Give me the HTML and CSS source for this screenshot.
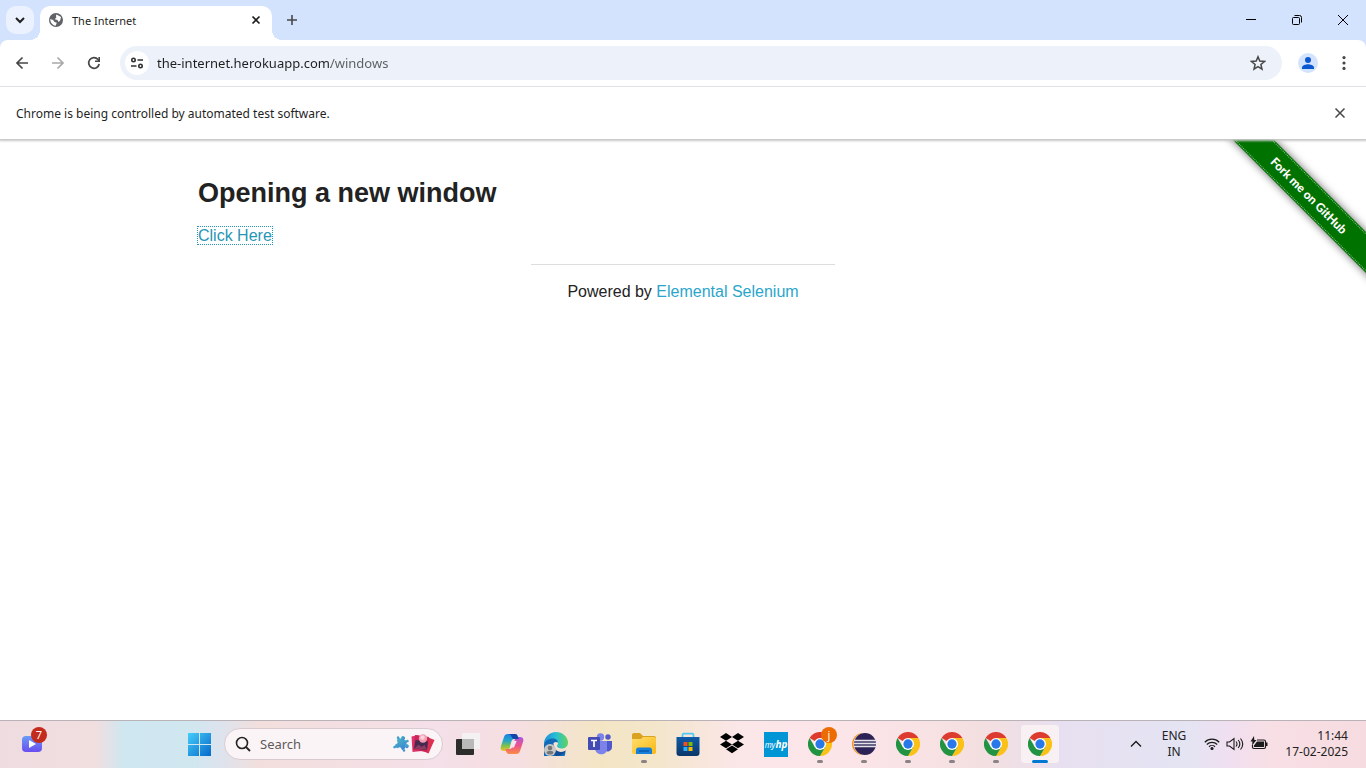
FILE: index.html
```html
<!DOCTYPE html>
<html lang="en">
<head>
<meta charset="utf-8">
<meta name="viewport" content="width=device-width, initial-scale=1">
<title>The Internet</title>
<link rel="stylesheet" href="styles.css">
</head>
<body>
<svg class="defs" aria-hidden="true">
  <defs>
    <linearGradient id="win" x1="0" y1="0" x2="1" y2="1"><stop offset="0" stop-color="#45cdfb"/><stop offset="1" stop-color="#0569c9"/></linearGradient>
    <linearGradient id="vid" x1="0" y1="0" x2="0" y2="1"><stop offset="0" stop-color="#6b9cf5"/><stop offset="1" stop-color="#6a4df0"/></linearGradient>
    <linearGradient id="puz" x1="0" y1="0" x2="1" y2="1"><stop offset="0" stop-color="#49b9c5"/><stop offset="1" stop-color="#3c7fd4"/></linearGradient>
    <linearGradient id="copA" x1="0" y1="0" x2="0" y2="1"><stop offset="0" stop-color="#1c7fe4"/><stop offset=".4" stop-color="#24a7c8"/><stop offset=".7" stop-color="#7fc14c"/><stop offset="1" stop-color="#f4c229"/></linearGradient>
    <linearGradient id="copB" x1="0" y1="0" x2="0" y2="1"><stop offset="0" stop-color="#a658df"/><stop offset=".5" stop-color="#ee5289"/><stop offset="1" stop-color="#fd8b45"/></linearGradient>
    <linearGradient id="edgeA" x1="0" y1="0" x2="1" y2="0"><stop offset="0" stop-color="#1c8fd8"/><stop offset=".5" stop-color="#29bfd4"/><stop offset="1" stop-color="#60d35b"/></linearGradient>
    <linearGradient id="fold" x1="0" y1="0" x2="1" y2="1"><stop offset="0" stop-color="#ffdf6d"/><stop offset="1" stop-color="#fbb713"/></linearGradient>
    <linearGradient id="store" x1="0" y1="0" x2="0" y2="1"><stop offset="0" stop-color="#0f5aa8"/><stop offset="1" stop-color="#0b3768"/></linearGradient>
    <symbol id="chrome" viewBox="0 0 48 48">
      <path fill="#de3b30" d="M24 24 3.2 12A24 24 0 0 1 44.8 12z"/>
      <path fill="#fbc116" d="M24 24V12h20.8A24 24 0 0 1 24 48l10.4-18z"/>
      <path fill="#229342" d="M24 24l10.4 6L24 48A24 24 0 0 1 3.2 12l10.4 18z"/>
      <circle cx="24" cy="24" r="12" fill="#fff"/>
      <circle cx="24" cy="24" r="9.3" fill="#2878ea"/>
    </symbol>
  </defs>
</svg>

<header class="browser">
  <div class="tabstrip">
    <button class="tab-search" aria-label="Search tabs"><svg width="12" height="12" viewBox="0 0 12 12"><path d="M2 4l4 4 4-4" fill="none" stroke="#1f1f1f" stroke-width="2"/></svg></button>
    <div class="tab">
      <svg width="16" height="16" viewBox="0 0 16 16"><circle cx="8" cy="8" r="7" fill="#5f6368"/><path d="M8.500 2.500 13 5l-.8 3.500-1.700 1.600-1-2.200-2.800-.6 1.800-2-.6-1.300zM2.200 7l2.900 1 1.500 2.100 2.200.6-1.100 3.100C5 13.400 2.400 11.300 2.200 7z" fill="#fff"/></svg>
      <span class="tab-title">The Internet</span>
      <button class="tab-close" aria-label="Close tab"><svg width="10" height="10" viewBox="0 0 10 10"><path d="M1.500 1.500l7 7m0-7l-7 7" stroke="#1f1f1f" stroke-width="1.700"/></svg></button>
    </div>
    <button class="new-tab" aria-label="New tab"><svg width="12" height="12" viewBox="0 0 12 12"><path d="M6 1v10M1 6h10" stroke="#474747" stroke-width="1.600"/></svg></button>
    <div class="win-controls">
      <button aria-label="Minimize"><svg width="12" height="12" viewBox="0 0 12 12"><path d="M1 5.500h10" stroke="#000"/></svg></button>
      <button aria-label="Restore"><svg width="12" height="12" viewBox="0 0 12 12" fill="none" stroke="#000"><rect x="1.500" y="3.500" width="7" height="7" rx="1"/><path d="M3.500 1.500h5a2 2 0 0 1 2 2v5"/></svg></button>
      <button aria-label="Close"><svg width="12" height="12" viewBox="0 0 12 12"><path d="M1 1l10 10m0-10L1 11" stroke="#000"/></svg></button>
    </div>
  </div>
  <div class="toolbar">
    <button aria-label="Back"><svg width="16" height="16" viewBox="0 0 16 16"><path d="M14 8H3m5.500-5.500L3 8l5.500 5.500" fill="none" stroke="#474747" stroke-width="1.700"/></svg></button>
    <button aria-label="Forward" disabled><svg width="16" height="16" viewBox="0 0 16 16"><path d="M2 8h11M7.500 2.500 13 8l-5.500 5.500" fill="none" stroke="#a9a9a9" stroke-width="1.700"/></svg></button>
    <button aria-label="Reload"><svg width="16" height="16" viewBox="0 0 16 16"><path d="M13.200 9A5.300 5.300 0 1 1 12 4.500l1.200 1.300" fill="none" stroke="#474747" stroke-width="1.700"/><path d="M14 2v5H9V5.400h3.400V2z" fill="#474747"/></svg></button>
    <div class="address">
      <button class="site-info" aria-label="View site information"><svg width="14" height="14" viewBox="0 0 14 14" fill="none" stroke="#303030" stroke-width="1.600"><circle cx="3.500" cy="4" r="1.700"/><path d="M7.500 4H13M1 10h5.500"/><circle cx="10.500" cy="10" r="1.700"/></svg></button>
      <input class="url" type="text" aria-label="Address and search bar" value="the-internet.herokuapp.com/windows" spellcheck="false">
      <button class="star" aria-label="Bookmark this tab"><svg width="16" height="16" viewBox="0 0 16 16"><path d="M8 1.800l1.800 4.300 4.700.4-3.600 3 1.100 4.600L8 11.700l-4 2.400 1.100-4.600-3.600-3 4.700-.4z" fill="none" stroke="#474747" stroke-width="1.500"/></svg></button>
    </div>
    <button aria-label="Profile"><svg width="20" height="20" viewBox="0 0 20 20"><circle cx="10" cy="10" r="10" fill="#d3e3fd"/><circle cx="10" cy="7" r="3" fill="#0b57d0"/><path d="M4 16v-1.500c0-2.300 4-3.300 6-3.300s6 1 6 3.300V16z" fill="#0b57d0"/></svg></button>
    <button aria-label="Menu"><svg width="16" height="16" viewBox="0 0 16 16" fill="#474747"><circle cx="8" cy="2.600" r="1.600"/><circle cx="8" cy="8" r="1.600"/><circle cx="8" cy="13.400" r="1.600"/></svg></button>
  </div>
  <div class="infobar">
    <p>Chrome is being controlled by automated test software.</p>
    <button aria-label="Dismiss"><svg width="12" height="12" viewBox="0 0 12 12"><path d="M1.500 1.500l9 9m0-9l-9 9" stroke="#474747" stroke-width="1.500"/></svg></button>
  </div>
</header>

<main class="page">
  <a class="ribbon" href="#github"><span>Fork me on GitHub</span></a>
  <div class="content">
    <h3>Opening a new window</h3>
    <a class="click" href="#new">Click Here</a>
  </div>
  <footer class="powered">
    <hr>
    Powered by <a href="#elemental">Elemental Selenium</a>
  </footer>
</main>

<nav class="taskbar" aria-label="Taskbar">
  <div class="widgets">
    <button class="task" aria-label="Widgets"><svg width="20" height="16" viewBox="0 0 20 16"><rect width="20" height="16" rx="4" fill="url(#vid)"/><path d="M7 4l7 4-7 4z" fill="#fff"/></svg><span class="badge red">7</span></button>
  </div>
  <div class="apps">
    <button class="task" aria-label="Start"><svg width="24" height="24" viewBox="0 0 24 24"><path d="M0 1h11v11H0zM12 1h11v11H12zM0 13h11v11H0zM12 13h11v11H12z" fill="url(#win)"/></svg></button>
    <label class="search">
      <svg width="16" height="16" viewBox="0 0 16 16"><circle cx="7" cy="7" r="5.500" fill="none" stroke="#222" stroke-width="1.600"/><path d="M11 11l4 4" stroke="#222" stroke-width="1.800"/></svg>
      <input type="text" placeholder="Search" aria-label="Search">
      <svg width="42" height="24" viewBox="0 0 42 24">
        <g transform="rotate(20 8 12)" fill="url(#puz)"><path d="M3 7h10v10H3z"/><circle cx="8" cy="5.800" r="2"/><circle cx="14.200" cy="12" r="2"/><circle cx="3" cy="7" r="1.300"/><circle cx="13" cy="7" r="1.300"/><circle cx="3" cy="17" r="1.300"/><circle cx="13" cy="17" r="1.300"/></g>
        <circle cx="2.600" cy="10.200" r="1.900" fill="#fbf4f6"/><circle cx="6.600" cy="17.200" r="1.900" fill="#fbf4f6"/>
        <path d="M18.500 4.500l7-1.500 3 16-9 1z" fill="#e0326c"/>
        <path d="M34 5l7.500 3-6 13.500-9-4z" fill="#dc2f51"/>
        <path d="M22 3l14 2-2 15-14-2z" fill="#c9265a"/>
        <path d="M22.500 8l12.500 1.500-1.200 8.500-12.600-1.500z" fill="#46294f"/>
        <circle cx="30" cy="6.500" r="4.200" fill="#f29db2"/><circle cx="29.500" cy="5.500" r="2.200" fill="#f6d5dc"/>
        <path d="M21.500 16.500l4-4 3 2.500 3-2 2.500 4.800z" fill="#8c3c63"/>
      </svg>
    </label>
    <button class="task" aria-label="Task view"><svg width="24" height="24" viewBox="0 0 24 24"><rect x="0" y="7" width="18" height="16" rx="1" fill="#2c2c2a"/><rect x="6" y="1" width="18" height="16" rx="1" fill="#f4f1f2"/><path d="M6 7h12v10H6z" fill="#b9b9b9"/></svg></button>
    <button class="task" aria-label="Copilot"><svg width="24" height="24" viewBox="0 0 24 24"><path d="M8 2h7c2 0 2.500 1.500 3 3l.8 2h-4C12 7 11.500 9 11 11l-1.500 5.500C9 18 8 19 6 19H4c-3 0-4-2-3-5l3-9c.6-2 1.700-3 4-3z" fill="url(#copA)"/><path d="M16 22H9c-2 0-2.500-1.500-3-3l-.6-2H9c3 0 3.700-2 4.300-4l1.500-5.500C15.300 6 16 5 18 5h2c3 0 4 2 3 5l-3 9c-.6 2-1.700 3-4 3z" fill="url(#copB)"/><path d="M8 2h7c2 0 2.500 1.500 3 3l.8 2h-4c-1.800 0-2.500-.4-3.100-2C11 3.500 10.500 2 8 2z" fill="#1746ab"/><path d="M12.500 9h4.200L14 15.500h-4z" fill="#f7e4ee"/></svg></button>
    <button class="task" aria-label="Edge"><svg width="24" height="24" viewBox="0 0 24 24"><path d="M0 12C0 5 5.500 0 12 0s12 5 12 10.500c0 4-3 6-6.500 6-2.500 0-4.500-1-4.500-2.500 0-1 1-1.500 1-3 0-2-2-3.500-4.500-3.500C5 7.500 2 10 0 12z" fill="url(#edgeA)"/><path d="M0 12c1-3 4.500-5.500 8.500-5.500 3.500 0 5.500 2 5.500 4-4-2-6 2-5 5 1.500 4.500 7 6.500 12.500 3.500A12 12 0 1 1 0 12z" fill="#126bb9"/><path d="M10 12c-1 4 3 8 7 8 2 0 4-1 5-2-2 4-6 6-10 6-5-3-6-9-2-12z" fill="#124c94"/><circle cx="6" cy="18" r="6" fill="#c9c7c5"/><circle cx="6" cy="16" r="2.300" fill="#777"/><path d="M2.500 21c0-3 7-3 7 0-2 2-5 2-7 0z" fill="#777"/></svg></button>
    <button class="task" aria-label="Teams"><svg width="24" height="24" viewBox="0 0 24 24"><circle cx="12.500" cy="5" r="3.700" fill="#7b83eb"/><circle cx="20" cy="5" r="2.700" fill="#5059c9"/><path d="M16 9h8v6c0 5-7 6-8 2z" fill="#5059c9"/><path d="M7 9h12v8c0 7-11 7-12 0z" fill="#7b83eb"/><rect y="5" width="12" height="13" rx="1" fill="#444bb2"/><path d="M3 8.500h6M6 8.500V15" stroke="#fff" stroke-width="1.700"/></svg></button>
    <button class="task open" aria-label="File Explorer"><svg width="24" height="24" viewBox="0 0 24 24"><path d="M0 3c0-1 .6-2 2-2h6l3 3h11c1.500 0 2 1 2 2v5H0z" fill="#daa220"/><path d="M0 7h9l2-2h11c1.500 0 2 1 2 2v13c0 1-.7 2-2 2H2c-1.300 0-2-1-2-2z" fill="url(#fold)"/><path d="M4 22v-4c0-1.500 1-2.500 2.500-2.500h11c1.500 0 2.500 1 2.500 2.500v4z" fill="#1780da"/><path d="M7 19h10" stroke="#0b5aab" stroke-width="1.500"/></svg></button>
    <button class="task" aria-label="Microsoft Store"><svg width="24" height="24" viewBox="0 0 24 24"><path d="M6.500 6V3c0-.8.500-1.300 1.300-1.300h8.400c.8 0 1.300.5 1.300 1.300v3" fill="none" stroke="#50c8f4" stroke-width="1.700"/><path d="M.5 5h23v16c0 2-1 3-3 3h-17c-2 0-3-1-3-3z" fill="url(#store)"/><path d="M7.500 10h4v4h-4z" fill="#f25022"/><path d="M12.500 10h4v4h-4z" fill="#7fba00"/><path d="M7.500 15h4v4h-4z" fill="#2db1f5"/><path d="M12.500 15h4v4h-4z" fill="#ffb900"/></svg></button>
    <button class="task" aria-label="Dropbox"><svg width="24" height="24" viewBox="0 0 24 24"><path d="M6 1l6 4-6 3.700L0 5zM18 1l6 4-6 3.700L12 5zM6 8.700l6 3.700-6 3.900-6-3.900zM18 8.700l6 3.700-6 3.900-6-3.900zM12 13.600l6 3.700-6 3.900-6-3.900z" fill="#000"/></svg></button>
    <button class="task" aria-label="myHP"><span class="hp">my<b>hp</b></span></button>
    <button class="task open" aria-label="Chrome, profile j"><svg width="24" height="24"><use href="#chrome"/></svg><span class="badge orange">j</span></button>
    <button class="task open" aria-label="Eclipse"><svg width="24" height="24" viewBox="0 0 24 24"><circle cx="11" cy="12" r="11" fill="#f7941e"/><circle cx="12.500" cy="12" r="11" fill="#f7e5e8"/><circle cx="13" cy="12" r="11" fill="#2c2255"/><path d="M2 8.500h22M2 11.500h22M2 14.500h22" stroke="#e5e2ec" stroke-width="1.600"/><path d="M2 10h22M2 13h22" stroke="#7b7895"/></svg></button>
    <button class="task open" aria-label="Chrome"><svg width="24" height="24"><use href="#chrome"/></svg></button>
    <button class="task open" aria-label="Chrome"><svg width="24" height="24"><use href="#chrome"/></svg></button>
    <button class="task open" aria-label="Chrome"><svg width="24" height="24"><use href="#chrome"/></svg></button>
    <button class="task open active" aria-label="Chrome"><svg width="24" height="24"><use href="#chrome"/></svg></button>
  </div>
  <div class="tray">
    <button class="chevron" aria-label="Show hidden icons"><svg width="12" height="12" viewBox="0 0 12 12"><path d="M1 8.500l5-5 5 5" fill="none" stroke="#1b1b1b" stroke-width="1.400"/></svg></button>
    <button class="lang">ENG<br>IN</button>
    <button class="status" aria-label="Network, volume, battery">
      <svg width="16" height="16" viewBox="0 0 16 16" fill="none" stroke="#1b1b1b" stroke-width="1.200"><path d="M.8 6.200a10.200 10.200 0 0 1 14.400 0M2.800 8.500a7.400 7.400 0 0 1 10.400 0M5 10.700a4.300 4.300 0 0 1 6 0"/><circle cx="8" cy="12.500" r="1" fill="#1b1b1b"/></svg>
      <svg width="18" height="16" viewBox="0 0 18 16" fill="none" stroke="#1b1b1b" stroke-width="1.100"><path d="M1 6h2.500L8 2.500v11L3.500 10H1zM10 5.500c1.200 1.500 1.200 3.500 0 5M12.200 4c2 2.400 2 5.600 0 8M14.500 2.500c2.700 3.300 2.700 7.700 0 11"/></svg>
      <svg width="18" height="16" viewBox="0 0 18 16"><path d="M7 4h7c1 0 1.500.5 1.500 1.500V11c0 1-.5 1.500-1.500 1.500H4c-1 0-1.500-.5-1.500-1.500V9" fill="none" stroke="#1b1b1b" stroke-width="1.200"/><path d="M7 5.500h7V11H4V9.500zM16 6.500h1.500v3.500H16z" fill="#1b1b1b"/><path d="M4 0L.5 5.500h2L2 9.500l4.500-5.500H4.300z" fill="#1b1b1b"/></svg>
    </button>
    <button class="clock">11:44<br>17-02-2025</button>
  </div>
</nav>
</body>
</html>
```

FILE: styles.css
```css
* {
  box-sizing: border-box;
}

body {
  margin: 0;
  min-height: 100vh;
  display: flex;
  flex-direction: column;
  background: #fff;
  color: #222;
  font-family: "Liberation Sans", Arial, sans-serif;
}

button {
  display: flex;
  align-items: center;
  justify-content: center;
  padding: 0;
  border: 0;
  background: none;
  color: inherit;
  font: inherit;
}

svg {
  display: block;
  flex: none;
}

.defs {
  position: absolute;
  width: 0;
  height: 0;
}

/* Browser chrome */
.browser {
  position: relative;
  z-index: 1;
  background: #d3e3fd;
  color: #1f1f1f;
  font-family: "Noto Sans", sans-serif;
  font-size: 12px;
  box-shadow: 0 1px 2px 1px #c6c8c6;
}

.tabstrip {
  display: flex;
  height: 40px;
  padding: 6px 0 0 6px;
}

.tab-search {
  width: 28px;
  height: 28px;
  border-radius: 10px;
  background: #ebf1fe;
}

.tab {
  position: relative;
  display: flex;
  align-items: center;
  gap: 8px;
  width: 232px;
  margin-left: 6px;
  padding: 0 8px 6px;
  border-radius: 10px 10px 0 0;
  background: #fff;
}

.tab::before,
.tab::after {
  content: "";
  position: absolute;
  bottom: 0;
  width: 10px;
  height: 10px;
}

.tab::before {
  right: 100%;
  background: radial-gradient(circle at 0 0, transparent 10px, #fff 10px);
}

.tab::after {
  left: 100%;
  background: radial-gradient(circle at 100% 0, transparent 10px, #fff 10px);
}

.tab-title {
  flex: 1;
  font-size: 11px;
}

.tab-close {
  width: 16px;
  height: 16px;
}

.new-tab {
  width: 28px;
  height: 28px;
  margin-left: 6px;
}

.win-controls {
  display: flex;
  margin-left: auto;
}

.win-controls button {
  width: 46px;
  height: 28px;
}

.toolbar {
  display: flex;
  align-items: center;
  height: 47px;
  padding: 0 4px;
  border-bottom: 1px solid #dfe1e4;
  border-radius: 8px 8px 0 0;
  background: #fff;
}

.toolbar > button {
  width: 36px;
  height: 36px;
}

.address {
  display: flex;
  align-items: center;
  flex: 1;
  height: 34px;
  margin: 0 8px;
  padding: 0 16px 0 5px;
  border-radius: 17px;
  background: #ecf1fa;
}

.site-info {
  width: 24px;
  height: 24px;
  border-radius: 50%;
  background: #fff;
}

.url {
  flex: 1;
  margin-left: 8px;
  padding: 0;
  border: 0;
  background: linear-gradient(90deg, #1f1f1f 174px, #5a5d61 174px);
  background-clip: text;
  color: transparent;
  font: 13px/20px "Noto Sans", sans-serif;
}

.infobar {
  display: flex;
  align-items: center;
  justify-content: space-between;
  height: 52px;
  padding: 0 16px;
  background: #fff;
}

.infobar p {
  margin: 0;
}

.infobar button {
  width: 20px;
  height: 20px;
}

/* Page */
.page {
  position: relative;
  flex: 1;
}

.content {
  max-width: 1000px;
  margin: 0 auto;
  padding: 34px 15px 0;
}

h3 {
  margin: 0 0 14px;
  font-size: 27px;
  line-height: 40px;
}

.page a {
  color: #2ba6cb;
  text-decoration: none;
}

.page .click {
  color: #2795b6;
  outline: 1px dotted #2795b6;
}

.powered {
  width: 304px;
  margin: 19px auto 0;
  line-height: 24px;
  text-align: center;
}

.powered hr {
  margin: 0 0 15px;
  border: 0;
  border-top: 1px solid #ddd;
}

.ribbon {
  position: absolute;
  top: 0;
  right: 0;
  width: 149px;
  height: 149px;
  overflow: hidden;
}

.ribbon span {
  position: absolute;
  top: 42px;
  left: -18px;
  width: 220px;
  padding: 1px 0;
  outline: 1px dotted #8cc08c;
  outline-offset: -2px;
  background: #007200;
  box-shadow: 0 0 8px rgba(0, 0, 0, 0.6);
  color: #fff;
  font: 900 12px/27px Lato, sans-serif;
  text-align: center;
  transform: rotate(45deg);
}

/* Taskbar */
.taskbar {
  display: flex;
  height: 48px;
  border-top: 1px solid #b9b2b7;
  background: linear-gradient(90deg, #eedce0 0, #f1dedf 7%, #cfe7f0 9%, #d0e7f0 14%, #dce3ee 16%, #f2dfdd 19%, #f5dfe8 32%, #f5dfe1 38%, #f3e5c4 44%, #f3e6cb 48%, #fbe6e8 54%, #fce5e9 62%, #f4dfe0 72%, #e7e0f1 78%, #e4e4f3 87%, #f0dff0 90%, #f8dfe5 93%, #f6dce0 100%);
  color: #222;
  font-family: "Noto Sans", sans-serif;
  font-size: 12px;
}

.widgets {
  display: flex;
  width: 126px;
  padding-left: 10px;
}

.apps {
  display: flex;
  align-items: center;
  height: 46px;
  margin: 0 auto;
}

.task {
  position: relative;
  width: 44px;
  height: 46px;
}

.badge {
  position: absolute;
  top: 6px;
  right: 5px;
  width: 16px;
  border-radius: 50%;
  color: #fff;
  font-size: 11px;
  line-height: 16px;
}

.red {
  right: 7px;
  background: #c42b1c;
}

.orange {
  background: #ed6c02;
}

.open::after {
  content: "";
  position: absolute;
  bottom: 4px;
  left: 19px;
  width: 6px;
  height: 3px;
  border-radius: 2px;
  background: #8b8285;
}

.active {
  border: 3px solid transparent;
  border-width: 4px 3px;
  border-radius: 7px;
  background: #f9f0f4 padding-box;
}

.active::after {
  bottom: 0;
  left: 11px;
  width: 16px;
  background: #0078d4;
}

.search {
  display: flex;
  align-items: center;
  width: 219px;
  height: 32px;
  margin: 0 3px 0 2px;
  padding: 0 7px 0 10px;
  border: 1px solid #d9cbd2;
  border-radius: 16px;
  background: #fbf4f6;
}

.search input {
  flex: 1;
  min-width: 0;
  margin: 0 0 0 9px;
  padding: 0;
  border: 0;
  background: none;
  font: 13px/20px "Noto Sans", sans-serif;
}

.search input::placeholder {
  color: #5e5a5c;
}

.hp {
  width: 24px;
  background: #0096d6;
  color: #fff;
  font: italic 8px/24px "Noto Sans", sans-serif;
}

.hp b {
  font-size: 10px;
}

.tray {
  display: flex;
  align-items: center;
  width: 252px;
  height: 46px;
  padding-right: 18px;
}

.tray button {
  line-height: 16px;
}

.chevron {
  width: 44px;
  height: 40px;
}

.lang {
  width: 32px;
}

.status {
  gap: 6px;
  margin-left: 14px;
}

.clock {
  flex: 1;
  justify-content: flex-end;
  text-align: right;
}
```
